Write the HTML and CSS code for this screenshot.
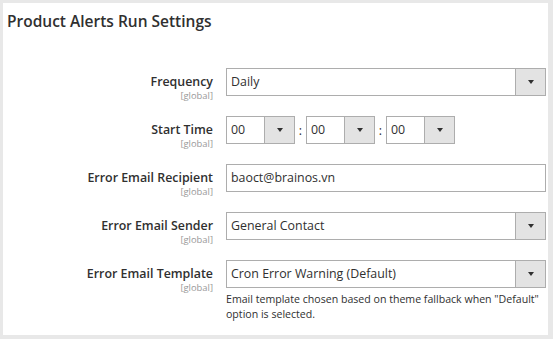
FILE: index.html
```html
<!DOCTYPE html>
<html lang="en">
<head>
    <meta charset="UTF-8">
    <meta name="viewport" content="width=device-width, initial-scale=1.0">
    <title>Product Alerts Run Settings</title>
    <link rel="stylesheet" href="styles.css">
</head>
<body>
    <div class="panel">
        <h2 class="panel-title">Product Alerts Run Settings</h2>

        <div class="form">
            <div class="row">
                <div class="label">
                    <span class="label-text">Frequency</span>
                    <span class="scope">[global]</span>
                </div>
                <div class="control">
                    <div class="select">
                        <span class="select-value">Daily</span>
                        <span class="select-arrow"></span>
                    </div>
                </div>
            </div>

            <div class="row">
                <div class="label">
                    <span class="label-text">Start Time</span>
                    <span class="scope">[global]</span>
                </div>
                <div class="control time">
                    <div class="select small">
                        <span class="select-value">00</span>
                        <span class="select-arrow"></span>
                    </div>
                    <span class="sep">:</span>
                    <div class="select small">
                        <span class="select-value">00</span>
                        <span class="select-arrow"></span>
                    </div>
                    <span class="sep">:</span>
                    <div class="select small">
                        <span class="select-value">00</span>
                        <span class="select-arrow"></span>
                    </div>
                </div>
            </div>

            <div class="row">
                <div class="label">
                    <span class="label-text">Error Email Recipient</span>
                    <span class="scope">[global]</span>
                </div>
                <div class="control">
                    <div class="input">baoct@brainos.vn</div>
                </div>
            </div>

            <div class="row">
                <div class="label">
                    <span class="label-text">Error Email Sender</span>
                    <span class="scope">[global]</span>
                </div>
                <div class="control">
                    <div class="select">
                        <span class="select-value">General Contact</span>
                        <span class="select-arrow"></span>
                    </div>
                </div>
            </div>

            <div class="row">
                <div class="label">
                    <span class="label-text">Error Email Template</span>
                    <span class="scope">[global]</span>
                </div>
                <div class="control">
                    <div class="select">
                        <span class="select-value">Cron Error Warning (Default)</span>
                        <span class="select-arrow"></span>
                    </div>
                    <p class="note">Email template chosen based on theme fallback when "Default" option is selected.</p>
                </div>
            </div>
        </div>
    </div>
</body>
</html>
```

FILE: styles.css
```css
/* page */
body {
    margin: 0;
    background-color: #e8e8e8;
    font-family: 'Open Sans', 'Liberation Sans', sans-serif;
    color: #303030;
}

.panel {
    margin: 3px 5px 4px 3px;
    height: 332px;
    box-sizing: border-box;
    background-color: #fff;
    padding: 8px 2px 0 4px;
}

.panel-title {
    margin: 0;
    font-size: 15.5px;
    font-weight: 600;
    line-height: 20px;
    color: #303030;
}

.form {
    margin-top: 37px;
    display: flex;
    flex-direction: column;
    gap: 15px;
}

.row {
    display: grid;
    grid-template-columns: 206px 320px;
    column-gap: 13px;
    align-items: start;
}

/* labels */
.label {
    display: flex;
    flex-direction: column;
    align-items: flex-end;
    padding-top: 5px;
}

.label-text {
    font-size: 12.4px;
    font-weight: 600;
    line-height: 17px;
}

.scope {
    font-size: 9.4px;
    line-height: 11px;
    color: #999;
}

/* fields */
.select,
.input {
    display: flex;
    height: 28px;
    box-sizing: border-box;
    border: 1px solid #adadad;
    background-color: #fff;
    font-size: 12.4px;
    line-height: 26px;
}

.input {
    padding: 0 4px;
}

.select-value {
    flex: 1;
    padding: 0 4px;
    white-space: nowrap;
    overflow: hidden;
}

.select-arrow {
    width: 29px;
    border-left: 1px solid #adadad;
    background-color: #e3e3e3;
    position: relative;
}

.select-arrow::after {
    content: "";
    position: absolute;
    left: 50%;
    top: 50%;
    margin: -2px 0 0 -3px;
    border-left: 3px solid transparent;
    border-right: 3px solid transparent;
    border-top: 4px solid #303030;
}

.time {
    display: flex;
    align-items: center;
}

.select.small {
    width: 69px;
}

.sep {
    width: 11px;
    text-align: center;
    font-size: 12.4px;
}

.note {
    margin: 4px 0 0;
    font-size: 10.6px;
    line-height: 14.5px;
}
```
